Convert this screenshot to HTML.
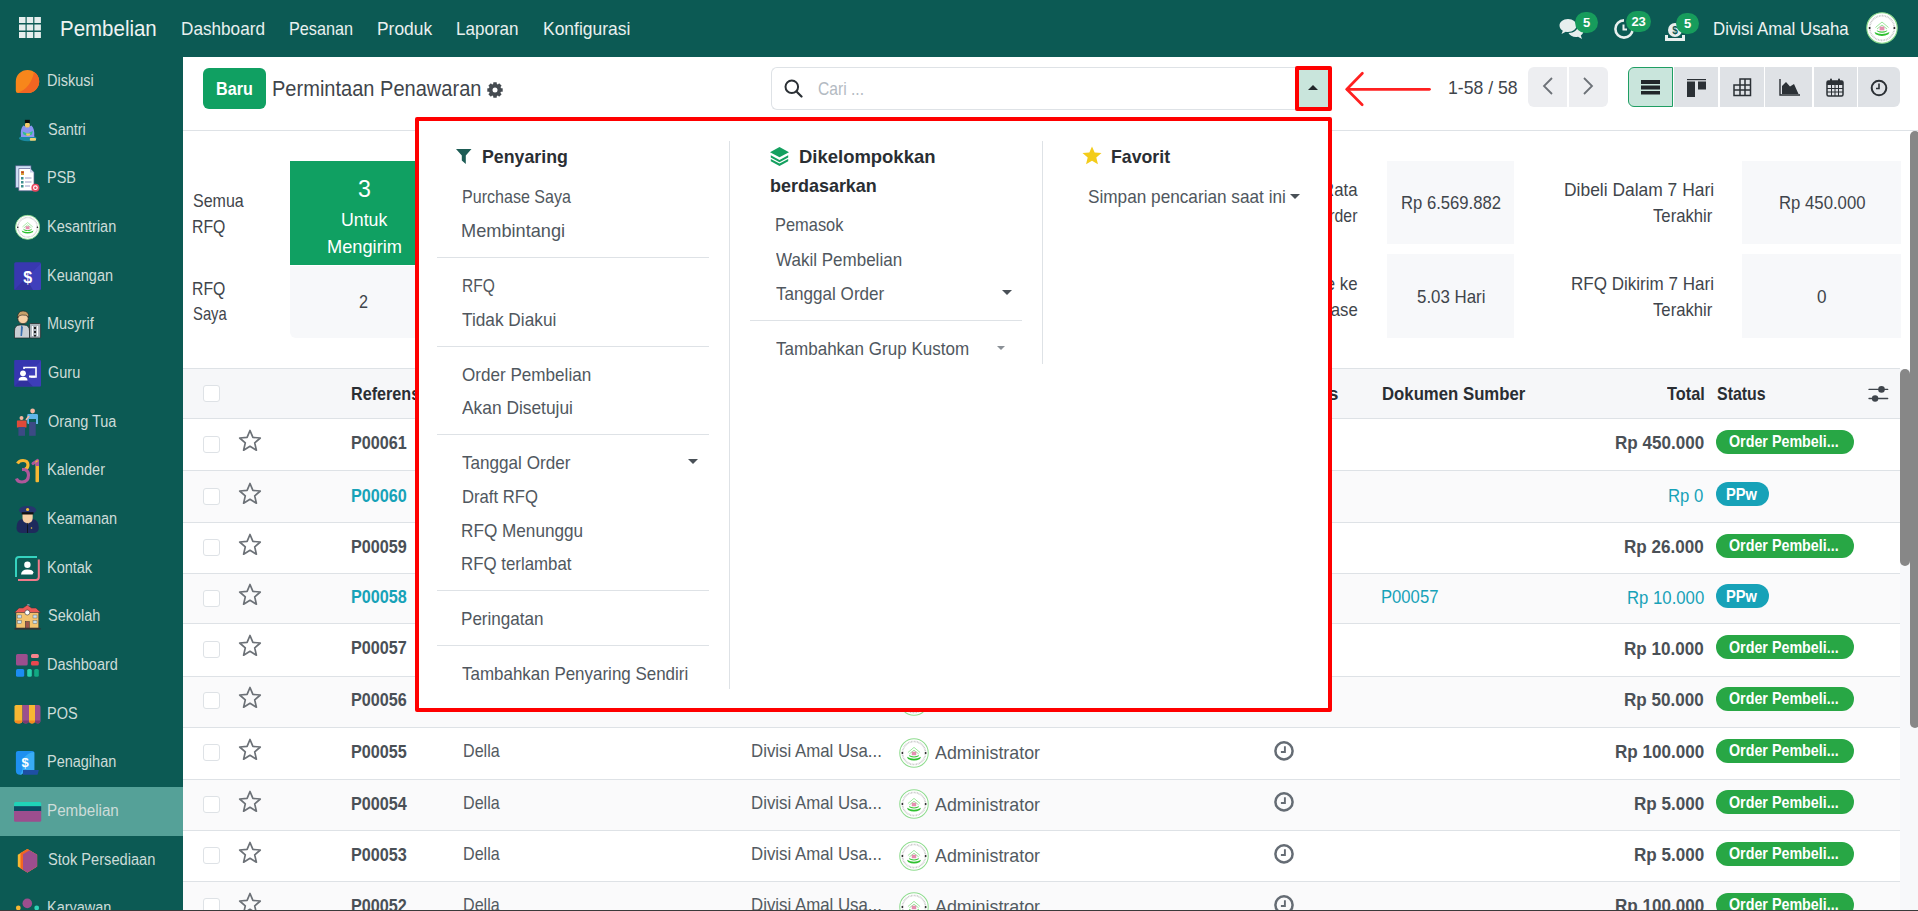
<!DOCTYPE html>
<html><head><meta charset="utf-8">
<style>
*{box-sizing:border-box;margin:0;padding:0}
html,body{width:1918px;height:911px;overflow:hidden;background:#fff;font-family:"Liberation Sans",sans-serif}
.a{position:absolute}
.t{position:absolute;white-space:nowrap;line-height:1;transform-origin:0 0}
.bdg{position:absolute;background:#179c5c;color:#fff;border-radius:11px;font-size:13px;font-weight:700;text-align:center;line-height:21px;height:21px}
.hl{position:absolute;height:1px;background:#dee2e6}
.vl{position:absolute;width:1px;background:#dee2e6}
.dv{position:absolute;height:1px;background:#dee2e6}
.cb{position:absolute;width:16.5px;height:17px;border:1px solid #dee2e6;border-radius:3px;background:#fff}
.caret{position:absolute;width:0;height:0;border-left:5px solid transparent;border-right:5px solid transparent;border-top:5px solid #495057}
</style></head><body>
<div class="a" style="left:0;top:0;width:1918px;height:57px;background:#0c5a54"></div>
<svg class="a" style="left:19px;top:17px" width="22" height="21" viewBox="0 0 22 21"><g fill="#e6eeed">
<rect x="0" y="0" width="6.5" height="6"/><rect x="7.7" y="0" width="6.5" height="6"/><rect x="15.4" y="0" width="6.5" height="6"/>
<rect x="0" y="7.5" width="6.5" height="6"/><rect x="7.7" y="7.5" width="6.5" height="6"/><rect x="15.4" y="7.5" width="6.5" height="6"/>
<rect x="0" y="15" width="6.5" height="6"/><rect x="7.7" y="15" width="6.5" height="6"/><rect x="15.4" y="15" width="6.5" height="6"/></g></svg>
<div class="t" style="left:59.85px;top:18.60px;font-size:21.5px;color:#eef3f2;transform:scaleX(0.9525);">Pembelian</div>
<div class="t" style="left:181.38px;top:19.96px;font-size:18.6px;color:#e9f0ef;transform:scaleX(0.9228);">Dashboard</div>
<div class="t" style="left:289.43px;top:19.96px;font-size:18.6px;color:#e9f0ef;transform:scaleX(0.8729);">Pesanan</div>
<div class="t" style="left:376.67px;top:19.96px;font-size:18.6px;color:#e9f0ef;transform:scaleX(0.9349);">Produk</div>
<div class="t" style="left:456.48px;top:19.96px;font-size:18.6px;color:#e9f0ef;transform:scaleX(0.9163);">Laporan</div>
<div class="t" style="left:542.76px;top:19.96px;font-size:18.6px;color:#e9f0ef;transform:scaleX(0.9396);">Konfigurasi</div>
<svg class="a" style="left:1559px;top:18px" width="25" height="22" viewBox="0 0 25 22"><path d="M9 1C4 1 0.5 4 0.5 7.5C0.5 9.7 1.8 11.5 3.8 12.7L2.5 16L6.8 13.8C7.5 14 8.2 14 9 14C14 14 17.5 11 17.5 7.5S14 1 9 1Z" fill="#e8efee"/><path d="M19 6.5C22 7.5 24.5 9.8 24.5 12.8C24.5 14.8 23.4 16.4 21.8 17.5L23 21L19 18.8C18.3 19 17.6 19 17 19C13.5 19 10.5 17.3 9.5 15C15 15 19.5 11.5 19 6.5Z" fill="#e8efee"/></svg>
<div class="bdg" style="left:1575px;top:12px;width:23px">5</div>
<svg class="a" style="left:1613px;top:17.5px" width="22" height="22" viewBox="0 0 22 22"><path d="M11 2.4A8.6 8.6 0 1 0 19.6 11" fill="none" stroke="#e8efee" stroke-width="2.6"/><path d="M10.5 6.5V11.5H14" stroke="#e8efee" stroke-width="2" fill="none"/></svg>
<div class="bdg" style="left:1626px;top:11px;width:25px;letter-spacing:-0.3px">23</div>
<svg class="a" style="left:1664px;top:21px" width="22" height="21" viewBox="0 0 22 21"><circle cx="11" cy="9" r="7" fill="#e8efee"/><text x="11" y="13" font-family="Liberation Sans" font-size="10" font-weight="700" fill="#0d5852" text-anchor="middle">$</text><path d="M1 14V20H21V14H18V17H4V14Z" fill="#e8efee"/></svg>
<div class="bdg" style="left:1676px;top:13px;width:23px">5</div>
<svg class="a" style="left:1866px;top:12px" width="32" height="32" viewBox="0 0 32 32"><circle cx="16" cy="16" r="15.2" fill="#fff" stroke="#8fdc8f" stroke-width="1.1"/><circle cx="16" cy="16" r="12.3" fill="none" stroke="#c9c9c9" stroke-width="1.8" stroke-dasharray="0.9 0.7"/><path d="M9.5 15.5L16 10L22.5 15.5M11 17L16 13L21 17" fill="none" stroke="#8be38b" stroke-width="0.9"/><rect x="13.6" y="14.6" width="4.8" height="3.8" fill="#e58fb0"/><path d="M10.5 18.2Q16 21 21.5 18.2L20.6 19.6Q16 22 11.4 19.6Z" fill="#3cc83c"/><path d="M8.5 20Q16 24 23.5 20L22.4 22.3Q16 25.5 9.6 22.3Z" fill="#2fc02f"/><circle cx="3.6" cy="16" r="1" fill="#222"/><circle cx="28.4" cy="16" r="1" fill="#222"/></svg>
<div class="t" style="left:1713.09px;top:20.16px;font-size:18.6px;color:#eef3f2;transform:scaleX(0.9056);">Divisi Amal Usaha</div>
<div class="a" style="left:0;top:57px;width:183px;height:854px;background:#0c5a54"></div>
<div class="a" style="left:0;top:787px;width:183px;height:48.6px;background:#55a198"></div>
<svg class="a" style="left:0;top:0" width="183" height="911" viewBox="0 0 183 911">
<!-- Diskusi -->
<path d="M27.5 70A11.7 11.5 0 0 1 39.2 81.5A11.7 11.5 0 0 1 27.5 93H18Q15.8 93 15.8 90.8V81.5A11.7 11.5 0 0 1 27.5 70Z" fill="#f7861b"/>
<path d="M34 72A11.7 11.5 0 0 1 39.2 81.5A11.7 11.5 0 0 1 27.5 93H17.5Q31 88 34 72Z" fill="#f26522"/>
<!-- Santri -->
<ellipse cx="27.8" cy="138.3" rx="8.9" ry="2.9" fill="#1a8aa2"/>
<path d="M21 137Q20 129 23.3 125.6L27.4 127.2L31.5 125.6Q35 129 34.2 137Z" fill="#8a95f2"/>
<path d="M22.5 131.5L27.5 133.5L32.8 131L32 134.5L27.5 136L23.5 134.5Z" fill="#2fbf8f"/>
<path d="M26 133.6H30.5L29.5 135.8H26.5Z" fill="#f0c865"/>
<ellipse cx="27.4" cy="125" rx="2.5" ry="2.6" fill="#f6c96b"/>
<rect x="24.9" y="119.8" width="4.9" height="3.2" fill="#0a0a0a"/>
<rect x="29.8" y="138" width="6.2" height="2.7" rx="1" fill="#f0cf70"/>
<!-- PSB -->
<rect x="15.7" y="165.8" width="15.3" height="21.9" fill="#cfe0f5" stroke="#5a5f8f" stroke-width="0.7"/>
<path d="M18.8 168.5H30L34 172.5V190.8H18.8Z" fill="#fff" stroke="#5a5f8f" stroke-width="0.7"/>
<path d="M30 168.5V172.5H34Z" fill="#c9cdea"/>
<rect x="21" y="171" width="3" height="4" fill="#d8a33a"/><rect x="21.3" y="171.5" width="2.4" height="1.6" fill="#c0392b"/>
<rect x="21" y="177" width="2.5" height="2.5" fill="#3d8f8f"/><rect x="21" y="181" width="2.5" height="2.5" fill="#3d8f8f"/><rect x="21" y="185" width="2.5" height="2.5" fill="#3d8f8f"/>
<path d="M25 178H31.5M25 182H31.5M25 186H30" stroke="#8d8fc0" stroke-width="0.9"/>
<circle cx="35.4" cy="187.7" r="4" fill="#e8465f"/><circle cx="35.4" cy="187.7" r="2.4" fill="#fff"/><circle cx="35.4" cy="187.7" r="1.2" fill="#e8465f"/>
<!-- Kesantrian -->
<svg x="14.9" y="214.6" width="25.4" height="25.4" viewBox="0 0 32 32"><circle cx="16" cy="16" r="15.2" fill="#fff" stroke="#8fdc8f" stroke-width="1.1"/><circle cx="16" cy="16" r="12.3" fill="none" stroke="#c9c9c9" stroke-width="1.8" stroke-dasharray="0.9 0.7"/><path d="M9.5 15.5L16 10L22.5 15.5M11 17L16 13L21 17" fill="none" stroke="#8be38b" stroke-width="0.9"/><rect x="13.6" y="14.6" width="4.8" height="3.8" fill="#e58fb0"/><path d="M10.5 18.2Q16 21 21.5 18.2L20.6 19.6Q16 22 11.4 19.6Z" fill="#3cc83c"/><path d="M8.5 20Q16 24 23.5 20L22.4 22.3Q16 25.5 9.6 22.3Z" fill="#2fc02f"/><circle cx="3.6" cy="16" r="1" fill="#222"/><circle cx="28.4" cy="16" r="1" fill="#222"/></svg>
<!-- Keuangan -->
<rect x="14.2" y="262.3" width="26.8" height="27.7" rx="1.5" fill="#3838b0"/>
<path d="M14.2 290L41 263.5V288.5Q41 290 39.5 290Z" fill="#4646c4" opacity="0.55"/>
<path d="M14.2 290L26 278L33 290Z" fill="#2c2c8f" opacity="0.6"/>
<text x="27.6" y="282.5" font-family="Liberation Sans" font-weight="700" font-size="16" fill="#fff" text-anchor="middle">$</text>
<!-- Musyrif -->
<path d="M14.5 338V331Q14.5 325 20 325H24Q29.5 325 29.5 331V338Z" fill="#c9ced3" stroke="#222" stroke-width="0.7"/>
<path d="M21 325L23 327L22 336L20.5 336L21 327Z" fill="#3b6fb0"/>
<circle cx="23" cy="318.5" r="5.2" fill="#f6cfa5" stroke="#222" stroke-width="0.7"/>
<path d="M17.5 318Q17.5 311 23 311Q28.8 311 28.8 317Q26 314.5 22 315Q19 315 17.5 318Z" fill="#c8a06a" stroke="#222" stroke-width="0.6"/>
<rect x="29.5" y="323.5" width="11.1" height="14.5" rx="1" fill="#a9b1b8" stroke="#222" stroke-width="0.7"/>
<path d="M32.5 326V336M37.5 326V336" stroke="#fff" stroke-width="1.2"/>
<g fill="#222"><rect x="34" y="327" width="2" height="2"/><rect x="34" y="331" width="2" height="2"/><rect x="34" y="335" width="2" height="1.5"/></g>
<!-- Guru -->
<rect x="14.2" y="360" width="26.8" height="26.5" rx="1" fill="#3636b0"/>
<path d="M14.2 386.5L41 361V385.5Q41 386.5 40 386.5Z" fill="#4444c2" opacity="0.5"/>
<path d="M14.2 386.5L24 377L33 386.5Z" fill="#2a2a8c" opacity="0.6"/>
<path d="M24 369V367.5H36V377H30.5" fill="none" stroke="#fff" stroke-width="1.6"/>
<circle cx="23" cy="373.3" r="2.9" fill="#fff"/>
<path d="M18.5 380.5Q18.5 376.8 23 376.8Q27.5 376.8 27.5 380.5Z" fill="#fff"/>
<rect x="29" y="375.5" width="6" height="2" fill="#fff"/>
<!-- Orang Tua -->
<circle cx="32.6" cy="411" r="2.4" fill="#f6b8a0"/>
<path d="M28 414H37Q38 414 38 415.5V424H36V419H29V424Q27.2 424 27.2 422.5V415.5Q27.2 414 28 414Z" fill="#5fb6e8"/>
<rect x="29.2" y="422" width="6.5" height="13.8" fill="#3c4a85"/>
<path d="M26 420L29 416" stroke="#f6b8a0" stroke-width="1.6"/>
<circle cx="21.5" cy="418" r="2" fill="#f6b8a0"/>
<path d="M17.5 420.4H25.8Q26.5 420.4 26.5 421.5V427.5H16.9V421.5Q16.9 420.4 17.5 420.4Z" fill="#e04a3a"/>
<rect x="18.4" y="427" width="6.6" height="8.8" fill="#3c4a85"/>
<!-- Kalender -->
<path d="M17.5 463.5Q19 460.5 23 460.5Q28 460.5 28 465Q28 468 25 469.5" fill="none" stroke="#f7b733" stroke-width="3.1"/>
<path d="M25 469.5Q28.5 471 28.5 475Q28.5 482 22 482Q17.5 482 16.5 478.5" fill="none" stroke="#b0579b" stroke-width="3.1"/>
<path d="M22 469.5H25" stroke="#b0579b" stroke-width="3.1"/>
<path d="M33 463.5L37.5 460.5" stroke="#b0579b" stroke-width="3.1" stroke-linecap="round"/>
<rect x="35.5" y="460.5" width="3.5" height="21.8" rx="1" fill="#f7b733"/>
<path d="M35.5 463L39 460.5V466L35.5 466Z" fill="#b0579b"/>
<!-- Keamanan -->
<path d="M16.5 528Q16.5 520 22 519L27.6 521L33 519Q38.8 520 38.8 528Q38.8 533 33 533H22Q16.5 533 16.5 528Z" fill="#1e2a5c"/>
<path d="M25 519.5H30.2L27.6 525Z" fill="#f3c9a2"/>
<path d="M27.2 522H28V533H27.2Z" fill="#111"/>
<circle cx="31.5" cy="528" r="0.8" fill="#f3c33a"/>
<path d="M22.5 513H32.7V518Q32.7 523 27.6 523Q22.5 523 22.5 518Z" fill="#f6cfa5"/>
<path d="M19 511Q19 506 27.6 506Q36.3 506 36.3 511L33.5 513.5H21.7Z" fill="#26366e"/>
<rect x="21.7" y="512.2" width="11.8" height="2.3" fill="#111"/>
<circle cx="27.6" cy="509.5" r="1.6" fill="#f3c33a"/>
<!-- Kontak -->
<path d="M37 557H19Q16 557 16 560V577" fill="none" stroke="#35d3bf" stroke-width="2"/>
<path d="M38.8 559.5V577Q38.8 580 35.8 580H18" fill="none" stroke="#f07a8a" stroke-width="2"/>
<circle cx="27.4" cy="564.8" r="3.2" fill="#fff"/>
<path d="M21 574.5Q21.5 569.5 27.4 569.5Q33 569.5 33.5 572.5L32.5 574.5Z" fill="#fff"/>
<!-- Sekolah -->
<path d="M27.3 604V608" stroke="#444" stroke-width="0.7"/><path d="M27.3 604L30.5 605L27.3 606Z" fill="#9fc1d6"/>
<rect x="16" y="612" width="22.8" height="16" fill="#f3c36f" stroke="#333" stroke-width="0.6"/>
<path d="M14.5 612.5L19 608H23L27.3 605L31.6 608H36L40.6 612.5Z" fill="#e95b57" stroke="#333" stroke-width="0.5"/>
<circle cx="27.3" cy="612.5" r="2.5" fill="#fff" stroke="#333" stroke-width="0.6"/>
<rect x="25.3" y="621.5" width="4" height="6.5" fill="#a0564a" stroke="#333" stroke-width="0.5"/>
<g fill="#c7e0f0" stroke="#555" stroke-width="0.4"><rect x="17.5" y="615" width="4" height="3"/><rect x="17.5" y="620.5" width="4" height="3"/><rect x="33" y="615" width="4" height="3"/><rect x="33" y="620.5" width="4" height="3"/></g>
<rect x="14.5" y="628" width="26.1" height="1.6" fill="#333"/>
<!-- Dashboard -->
<rect x="16" y="654" width="11.7" height="11.5" rx="1.5" fill="#9c4e8e"/>
<rect x="31" y="654" width="7.8" height="4" rx="1.5" fill="#f7838c"/>
<rect x="31" y="661" width="7.8" height="4.5" rx="1.5" fill="#e8474f"/>
<rect x="16" y="669" width="8.2" height="7.8" rx="1.5" fill="#1c8cf2"/>
<rect x="27.2" y="669" width="4.6" height="7.8" rx="1.5" fill="#28d0ab"/>
<rect x="34.2" y="669" width="4.6" height="7.8" rx="1.5" fill="#11a982"/>
<!-- POS -->
<path d="M16 705H22.5V720.5Q22.5 723.5 19.2 723.5Q14.5 723.5 14.5 720.5V706.5Q14.5 705 16 705Z" fill="#f7b733"/>
<path d="M22.5 705H29V720.5Q29 723.5 25.8 723.5Q22.5 723.5 22.5 720.5Z" fill="#9c4e8e"/>
<path d="M29 705H35V720.5Q35 723.5 32 723.5Q29 723.5 29 720.5Z" fill="#f7b733"/>
<path d="M35 705H38.5Q40.5 705 40.5 707V720.5Q40.5 723.5 37.8 723.5Q35 723.5 35 720.5Z" fill="#9c4e8e"/>
<path d="M14.5 720.5Q14.5 723.5 18.5 723.5Q22.5 723.5 22.5 720.5Z" fill="#f58a1f"/>
<path d="M29 720.5Q29 723.5 32 723.5Q35 723.5 35 720.5Z" fill="#f58a1f"/>
<path d="M22.5 720.5Q22.5 723.5 25.8 723.5Q29 723.5 29 720.5Z" fill="#7d3a70"/>
<path d="M35 720.5Q35 723.5 37.8 723.5Q40.5 723.5 40.5 720.5Z" fill="#7d3a70"/>
<!-- Penagihan -->
<path d="M23 770H38.5Q39 770 38.6 771L37.5 774.7H23Z" fill="#1e4fa3"/>
<path d="M15.9 753Q15.9 750.9 18 750.9H32.2Q34.3 750.9 34.3 753V770H23V772Q23 774.7 20 774.7Q15.9 774.7 15.9 771Z" fill="#1e90f0"/>
<path d="M34.3 752V770H23V772Q23 774.7 20 774.7Q24 770 22 760Q28 752 34.3 752Z" fill="#3fb4f8" opacity="0.8"/>
<text x="25.2" y="767" font-family="Liberation Sans" font-weight="700" font-size="13" fill="#fff" text-anchor="middle">$</text>
<!-- Pembelian -->
<path d="M14 803.5Q14 802 15.5 802H39.7Q41.2 802 41.2 803.5V806.5H14Z" fill="#20d3b8"/>
<rect x="14" y="806.2" width="27.2" height="5" fill="#0b4d63"/>
<path d="M14 811H41.2V820.2Q41.2 821.7 39.7 821.7H15.5Q14 821.7 14 820.2Z" fill="#9c4e8e"/>
<!-- Stok -->
<path d="M27.4 849L37.1 854.8V866.6L27.4 872.4L17.8 866.6V854.8Z" fill="#f7b733"/>
<path d="M27.4 849L37.1 854.8V866.6L27.4 872.4L20.5 868.2V853Z" fill="#f26522"/>
<path d="M29.5 850.3L37.1 854.8V866.6L27.4 872.4L23 869.7V854.2Z" fill="#9c4e8e"/>
<!-- Karyawan -->
<circle cx="27.3" cy="903.4" r="4.8" fill="#9c4e8e"/>
<circle cx="18.3" cy="908" r="2.4" fill="#f7b733"/>
<circle cx="36.7" cy="908" r="2.4" fill="#2ed3b7"/>
</svg>

<div class="t" style="left:47.29px;top:73.16px;font-size:16px;color:#cddcd9;transform:scaleX(0.9059);">Diskusi</div>
<div class="t" style="left:48.00px;top:121.81px;font-size:16px;color:#cddcd9;transform:scaleX(0.9050);">Santri</div>
<div class="t" style="left:47.09px;top:170.46px;font-size:16px;color:#cddcd9;transform:scaleX(0.9050);">PSB</div>
<div class="t" style="left:47.09px;top:219.11px;font-size:16px;color:#cddcd9;transform:scaleX(0.9050);">Kesantrian</div>
<div class="t" style="left:47.09px;top:267.76px;font-size:16px;color:#cddcd9;transform:scaleX(0.9050);">Keuangan</div>
<div class="t" style="left:47.09px;top:316.41px;font-size:16px;color:#cddcd9;transform:scaleX(0.9050);">Musyrif</div>
<div class="t" style="left:48.00px;top:365.06px;font-size:16px;color:#cddcd9;transform:scaleX(0.9050);">Guru</div>
<div class="t" style="left:48.00px;top:413.71px;font-size:16px;color:#cddcd9;transform:scaleX(0.9050);">Orang Tua</div>
<div class="t" style="left:47.09px;top:462.36px;font-size:16px;color:#cddcd9;transform:scaleX(0.9050);">Kalender</div>
<div class="t" style="left:47.09px;top:511.01px;font-size:16px;color:#cddcd9;transform:scaleX(0.9050);">Keamanan</div>
<div class="t" style="left:47.09px;top:559.66px;font-size:16px;color:#cddcd9;transform:scaleX(0.9050);">Kontak</div>
<div class="t" style="left:48.00px;top:608.31px;font-size:16px;color:#cddcd9;transform:scaleX(0.9050);">Sekolah</div>
<div class="t" style="left:47.09px;top:656.96px;font-size:16px;color:#cddcd9;transform:scaleX(0.9050);">Dashboard</div>
<div class="t" style="left:47.09px;top:705.61px;font-size:16px;color:#cddcd9;transform:scaleX(0.9050);">POS</div>
<div class="t" style="left:47.09px;top:754.26px;font-size:16px;color:#cddcd9;transform:scaleX(0.9050);">Penagihan</div>
<div class="t" style="left:46.75px;top:802.91px;font-size:16px;color:#cddcd9;transform:scaleX(0.9498);">Pembelian</div>
<div class="t" style="left:47.70px;top:851.56px;font-size:16px;color:#cddcd9;transform:scaleX(0.9141);">Stok Persediaan</div>
<div class="t" style="left:47.09px;top:900.21px;font-size:16px;color:#cddcd9;transform:scaleX(0.9050);">Karyawan</div>
<div class="a" style="left:183px;top:57px;width:1735px;height:854px;background:#fff"></div>
<div class="hl" style="left:183px;top:130px;width:1735px"></div>
<div class="t" style="left:192.60px;top:192.36px;font-size:18.6px;color:#3f454b;transform:scaleX(0.8611);">Semua</div>
<div class="t" style="left:191.75px;top:217.86px;font-size:18.6px;color:#3f454b;transform:scaleX(0.8495);">RFQ</div>
<div class="t" style="left:191.75px;top:279.66px;font-size:18.6px;color:#3f454b;transform:scaleX(0.8495);">RFQ</div>
<div class="t" style="left:192.60px;top:305.46px;font-size:18.6px;color:#3f454b;transform:scaleX(0.7969);">Saya</div>
<div class="a" style="left:290px;top:161px;width:149px;height:104px;background:#10a062"></div>
<div class="a" style="left:290px;top:266px;width:149px;height:72px;background:#f7f8fa;border-radius:0 0 0 6px"></div>
<div class="t" style="left:357.90px;top:177.83px;font-size:23px;color:#fff;transform:scaleX(1.0083);">3</div>
<div class="t" style="left:341.05px;top:210.76px;font-size:18.6px;color:#fff;transform:scaleX(0.9529);">Untuk</div>
<div class="t" style="left:327.32px;top:237.76px;font-size:18.6px;color:#fff;transform:scaleX(0.9805);">Mengirim</div>
<div class="t" style="left:358.60px;top:293.06px;font-size:18.6px;color:#3f454b;transform:scaleX(0.8700);">2</div>
<div class="t" style="left:1243.54px;top:181.06px;font-size:18.6px;color:#3f454b;transform:scaleX(0.9000);">Nilai Rata-Rata</div>
<div class="t" style="left:1317.36px;top:207.06px;font-size:18.6px;color:#3f454b;transform:scaleX(0.8500);">Order</div>
<div class="t" style="left:1257.14px;top:275.06px;font-size:18.6px;color:#3f454b;transform:scaleX(0.9000);">Lead Time ke</div>
<div class="t" style="left:1287.21px;top:301.06px;font-size:18.6px;color:#3f454b;transform:scaleX(0.9000);">Purchase</div>
<div class="a" style="left:1387px;top:161px;width:127px;height:83px;background:#f7f8fa"></div>
<div class="a" style="left:1387px;top:254px;width:127px;height:84px;background:#f7f8fa"></div>
<div class="t" style="left:1400.51px;top:194.06px;font-size:18.6px;color:#3f454b;transform:scaleX(0.8947);">Rp 6.569.882</div>
<div class="t" style="left:1417.40px;top:288.16px;font-size:18.6px;color:#3f454b;transform:scaleX(0.9069);">5.03 Hari</div>
<div class="t" style="left:1563.56px;top:181.06px;font-size:18.6px;color:#3f454b;transform:scaleX(0.9372);">Dibeli Dalam 7 Hari</div>
<div class="t" style="left:1653.40px;top:207.06px;font-size:18.6px;color:#3f454b;transform:scaleX(0.8978);">Terakhir</div>
<div class="t" style="left:1570.68px;top:275.06px;font-size:18.6px;color:#3f454b;transform:scaleX(0.9165);">RFQ Dikirim 7 Hari</div>
<div class="t" style="left:1653.40px;top:301.06px;font-size:18.6px;color:#3f454b;transform:scaleX(0.8978);">Terakhir</div>
<div class="a" style="left:1742px;top:161px;width:159px;height:83px;background:#f7f8fa"></div>
<div class="a" style="left:1742px;top:254px;width:159px;height:84px;background:#f7f8fa"></div>
<div class="t" style="left:1778.80px;top:194.06px;font-size:18.6px;color:#3f454b;transform:scaleX(0.8997);">Rp 450.000</div>
<div class="t" style="left:1817.40px;top:288.16px;font-size:18.6px;color:#3f454b;transform:scaleX(0.9200);">0</div>
<div class="a" style="left:183px;top:368px;width:1717px;height:51px;background:#f6f7f9;border-top:1px solid #dee2e6;border-bottom:1px solid #dee2e6"></div>
<div class="cb" style="left:203px;top:385px"></div>
<div class="t" style="left:350.93px;top:385.06px;font-size:18.6px;font-weight:700;color:#2a2e33;transform:scaleX(0.8700);">Referensi</div>
<div class="t" style="left:1260.00px;top:385.06px;font-size:18.6px;font-weight:700;color:#2a2e33;transform:scaleX(1.0108);">Aktivitas</div>
<div class="t" style="left:1381.60px;top:385.06px;font-size:18.6px;font-weight:700;color:#2a2e33;transform:scaleX(0.9007);">Dokumen Sumber</div>
<div class="t" style="left:1666.70px;top:385.06px;font-size:18.6px;font-weight:700;color:#2a2e33;transform:scaleX(0.8790);">Total</div>
<div class="t" style="left:1716.60px;top:385.06px;font-size:18.6px;font-weight:700;color:#2a2e33;transform:scaleX(0.8569);">Status</div>
<svg class="a" style="left:1868px;top:385px" width="21" height="18" viewBox="0 0 21 18"><path d="M1 4.4H19.7M1 13.5H19.7" stroke="#3f454c" stroke-width="1.3" stroke-linecap="round"/><circle cx="13.5" cy="4.4" r="3.3" fill="#3f454c"/><circle cx="7.1" cy="13.5" r="3.2" fill="#3f454c"/></svg>
<div class="a" style="left:183px;top:419px;width:1717px;height:51px;background:#fff"></div>
<div class="hl" style="left:183px;top:470px;width:1717px"></div>
<div class="cb" style="left:203px;top:435.50px"></div>
<svg class="a" style="left:238px;top:429.30px" width="24" height="23" viewBox="0 0 24 23"><path d="M12 1.5L14.9 8.4L22.3 9L16.7 13.9L18.4 21.2L12 17.3L5.6 21.2L7.3 13.9L1.7 9L9.1 8.4Z" fill="none" stroke="#6c7177" stroke-width="1.7" stroke-linejoin="round"/></svg>
<div class="t" style="left:350.93px;top:434.36px;font-size:18.6px;font-weight:700;color:#4a5056;transform:scaleX(0.8715);">P00061</div>
<div class="t" style="left:1614.68px;top:434.46px;font-size:18.6px;font-weight:700;color:#4a5056;transform:scaleX(0.9173);">Rp 450.000</div>
<div class="a" style="left:1716px;top:430.00px;width:138px;height:24px;border-radius:12px;background:#28a745"></div>
<div class="t" style="left:1728.50px;top:434.46px;font-size:16.7px;font-weight:700;color:#fff;transform:scaleX(0.8567);">Order Pembeli...</div>
<div class="a" style="left:183px;top:471px;width:1717px;height:51px;background:#fafafb"></div>
<div class="hl" style="left:183px;top:522px;width:1717px"></div>
<div class="cb" style="left:203px;top:487.70px"></div>
<svg class="a" style="left:238px;top:481.50px" width="24" height="23" viewBox="0 0 24 23"><path d="M12 1.5L14.9 8.4L22.3 9L16.7 13.9L18.4 21.2L12 17.3L5.6 21.2L7.3 13.9L1.7 9L9.1 8.4Z" fill="none" stroke="#6c7177" stroke-width="1.7" stroke-linejoin="round"/></svg>
<div class="t" style="left:350.93px;top:486.56px;font-size:18.6px;font-weight:700;color:#17a2b8;transform:scaleX(0.8715);">P00060</div>
<div class="t" style="left:1668.46px;top:486.66px;font-size:18.6px;color:#17a2b8;transform:scaleX(0.9000);">Rp 0</div>
<div class="a" style="left:1716px;top:482.20px;width:53px;height:24px;border-radius:12px;background:#17a2b8"></div>
<div class="t" style="left:1726.12px;top:486.66px;font-size:16.7px;font-weight:700;color:#fff;transform:scaleX(0.8792);">PPw</div>
<div class="a" style="left:183px;top:523px;width:1717px;height:50px;background:#fff"></div>
<div class="hl" style="left:183px;top:573px;width:1717px"></div>
<div class="cb" style="left:203px;top:539.15px"></div>
<svg class="a" style="left:238px;top:532.95px" width="24" height="23" viewBox="0 0 24 23"><path d="M12 1.5L14.9 8.4L22.3 9L16.7 13.9L18.4 21.2L12 17.3L5.6 21.2L7.3 13.9L1.7 9L9.1 8.4Z" fill="none" stroke="#6c7177" stroke-width="1.7" stroke-linejoin="round"/></svg>
<div class="t" style="left:350.93px;top:538.01px;font-size:18.6px;font-weight:700;color:#4a5056;transform:scaleX(0.8715);">P00059</div>
<div class="t" style="left:1624.17px;top:538.11px;font-size:18.6px;font-weight:700;color:#4a5056;transform:scaleX(0.9173);">Rp 26.000</div>
<div class="a" style="left:1716px;top:533.65px;width:138px;height:24px;border-radius:12px;background:#28a745"></div>
<div class="t" style="left:1728.50px;top:538.11px;font-size:16.7px;font-weight:700;color:#fff;transform:scaleX(0.8567);">Order Pembeli...</div>
<div class="a" style="left:183px;top:574px;width:1717px;height:49px;background:#fafafb"></div>
<div class="hl" style="left:183px;top:623px;width:1717px"></div>
<div class="cb" style="left:203px;top:589.55px"></div>
<svg class="a" style="left:238px;top:583.35px" width="24" height="23" viewBox="0 0 24 23"><path d="M12 1.5L14.9 8.4L22.3 9L16.7 13.9L18.4 21.2L12 17.3L5.6 21.2L7.3 13.9L1.7 9L9.1 8.4Z" fill="none" stroke="#6c7177" stroke-width="1.7" stroke-linejoin="round"/></svg>
<div class="t" style="left:350.93px;top:588.41px;font-size:18.6px;font-weight:700;color:#17a2b8;transform:scaleX(0.8715);">P00058</div>
<div class="t" style="left:1380.80px;top:588.41px;font-size:18.6px;color:#17a2b8;transform:scaleX(0.8954);">P00057</div>
<div class="t" style="left:1626.58px;top:588.51px;font-size:18.6px;color:#17a2b8;transform:scaleX(0.9000);">Rp 10.000</div>
<div class="a" style="left:1716px;top:584.05px;width:53px;height:24px;border-radius:12px;background:#17a2b8"></div>
<div class="t" style="left:1726.12px;top:588.51px;font-size:16.7px;font-weight:700;color:#fff;transform:scaleX(0.8792);">PPw</div>
<div class="a" style="left:183px;top:624px;width:1717px;height:52px;background:#fff"></div>
<div class="hl" style="left:183px;top:676px;width:1717px"></div>
<div class="cb" style="left:203px;top:640.60px"></div>
<svg class="a" style="left:238px;top:634.40px" width="24" height="23" viewBox="0 0 24 23"><path d="M12 1.5L14.9 8.4L22.3 9L16.7 13.9L18.4 21.2L12 17.3L5.6 21.2L7.3 13.9L1.7 9L9.1 8.4Z" fill="none" stroke="#6c7177" stroke-width="1.7" stroke-linejoin="round"/></svg>
<div class="t" style="left:350.93px;top:639.46px;font-size:18.6px;font-weight:700;color:#4a5056;transform:scaleX(0.8715);">P00057</div>
<div class="t" style="left:1624.17px;top:639.56px;font-size:18.6px;font-weight:700;color:#4a5056;transform:scaleX(0.9173);">Rp 10.000</div>
<div class="a" style="left:1716px;top:635.10px;width:138px;height:24px;border-radius:12px;background:#28a745"></div>
<div class="t" style="left:1728.50px;top:639.56px;font-size:16.7px;font-weight:700;color:#fff;transform:scaleX(0.8567);">Order Pembeli...</div>
<div class="a" style="left:183px;top:677px;width:1717px;height:50px;background:#fafafb"></div>
<div class="hl" style="left:183px;top:727px;width:1717px"></div>
<div class="cb" style="left:203px;top:692.40px"></div>
<svg class="a" style="left:238px;top:686.20px" width="24" height="23" viewBox="0 0 24 23"><path d="M12 1.5L14.9 8.4L22.3 9L16.7 13.9L18.4 21.2L12 17.3L5.6 21.2L7.3 13.9L1.7 9L9.1 8.4Z" fill="none" stroke="#6c7177" stroke-width="1.7" stroke-linejoin="round"/></svg>
<div class="t" style="left:350.93px;top:691.26px;font-size:18.6px;font-weight:700;color:#4a5056;transform:scaleX(0.8715);">P00056</div>
<div class="t" style="left:462.83px;top:690.26px;font-size:18.6px;color:#535a61;transform:scaleX(0.8660);">Della</div>
<div class="t" style="left:750.70px;top:690.36px;font-size:18.6px;color:#535a61;transform:scaleX(0.9045);">Divisi Amal Usa...</div>
<svg class="a" style="left:899px;top:685.90px" width="30" height="30" viewBox="0 0 32 32"><circle cx="16" cy="16" r="15.2" fill="#fff" stroke="#8fdc8f" stroke-width="1.1"/><circle cx="16" cy="16" r="12.3" fill="none" stroke="#c9c9c9" stroke-width="1.8" stroke-dasharray="0.9 0.7"/><path d="M9.5 15.5L16 10L22.5 15.5M11 17L16 13L21 17" fill="none" stroke="#8be38b" stroke-width="0.9"/><rect x="13.6" y="14.6" width="4.8" height="3.8" fill="#e58fb0"/><path d="M10.5 18.2Q16 21 21.5 18.2L20.6 19.6Q16 22 11.4 19.6Z" fill="#3cc83c"/><path d="M8.5 20Q16 24 23.5 20L22.4 22.3Q16 25.5 9.6 22.3Z" fill="#2fc02f"/><circle cx="3.6" cy="16" r="1" fill="#222"/><circle cx="28.4" cy="16" r="1" fill="#222"/></svg>
<div class="t" style="left:934.60px;top:692.26px;font-size:18.6px;color:#535a61;transform:scaleX(0.9585);">Administrator</div>
<svg class="a" style="left:1274px;top:688.90px" width="20" height="20" viewBox="0 0 20 20"><circle cx="10" cy="9.9" r="8.6" fill="none" stroke="#656c74" stroke-width="2.5"/><path d="M10.9 5.2V11H6.9" stroke="#656c74" stroke-width="1.9" fill="none"/></svg>
<div class="t" style="left:1624.17px;top:691.36px;font-size:18.6px;font-weight:700;color:#4a5056;transform:scaleX(0.9173);">Rp 50.000</div>
<div class="a" style="left:1716px;top:686.90px;width:138px;height:24px;border-radius:12px;background:#28a745"></div>
<div class="t" style="left:1728.50px;top:691.36px;font-size:16.7px;font-weight:700;color:#fff;transform:scaleX(0.8567);">Order Pembeli...</div>
<div class="a" style="left:183px;top:728px;width:1717px;height:51px;background:#fff"></div>
<div class="hl" style="left:183px;top:779px;width:1717px"></div>
<div class="cb" style="left:203px;top:744.05px"></div>
<svg class="a" style="left:238px;top:737.85px" width="24" height="23" viewBox="0 0 24 23"><path d="M12 1.5L14.9 8.4L22.3 9L16.7 13.9L18.4 21.2L12 17.3L5.6 21.2L7.3 13.9L1.7 9L9.1 8.4Z" fill="none" stroke="#6c7177" stroke-width="1.7" stroke-linejoin="round"/></svg>
<div class="t" style="left:350.93px;top:742.91px;font-size:18.6px;font-weight:700;color:#4a5056;transform:scaleX(0.8715);">P00055</div>
<div class="t" style="left:462.83px;top:741.91px;font-size:18.6px;color:#535a61;transform:scaleX(0.8660);">Della</div>
<div class="t" style="left:750.70px;top:742.01px;font-size:18.6px;color:#535a61;transform:scaleX(0.9045);">Divisi Amal Usa...</div>
<svg class="a" style="left:899px;top:737.55px" width="30" height="30" viewBox="0 0 32 32"><circle cx="16" cy="16" r="15.2" fill="#fff" stroke="#8fdc8f" stroke-width="1.1"/><circle cx="16" cy="16" r="12.3" fill="none" stroke="#c9c9c9" stroke-width="1.8" stroke-dasharray="0.9 0.7"/><path d="M9.5 15.5L16 10L22.5 15.5M11 17L16 13L21 17" fill="none" stroke="#8be38b" stroke-width="0.9"/><rect x="13.6" y="14.6" width="4.8" height="3.8" fill="#e58fb0"/><path d="M10.5 18.2Q16 21 21.5 18.2L20.6 19.6Q16 22 11.4 19.6Z" fill="#3cc83c"/><path d="M8.5 20Q16 24 23.5 20L22.4 22.3Q16 25.5 9.6 22.3Z" fill="#2fc02f"/><circle cx="3.6" cy="16" r="1" fill="#222"/><circle cx="28.4" cy="16" r="1" fill="#222"/></svg>
<div class="t" style="left:934.60px;top:743.91px;font-size:18.6px;color:#535a61;transform:scaleX(0.9585);">Administrator</div>
<svg class="a" style="left:1274px;top:740.55px" width="20" height="20" viewBox="0 0 20 20"><circle cx="10" cy="9.9" r="8.6" fill="none" stroke="#656c74" stroke-width="2.5"/><path d="M10.9 5.2V11H6.9" stroke="#656c74" stroke-width="1.9" fill="none"/></svg>
<div class="t" style="left:1614.68px;top:743.01px;font-size:18.6px;font-weight:700;color:#4a5056;transform:scaleX(0.9173);">Rp 100.000</div>
<div class="a" style="left:1716px;top:738.55px;width:138px;height:24px;border-radius:12px;background:#28a745"></div>
<div class="t" style="left:1728.50px;top:743.01px;font-size:16.7px;font-weight:700;color:#fff;transform:scaleX(0.8567);">Order Pembeli...</div>
<div class="a" style="left:183px;top:780px;width:1717px;height:50px;background:#fafafb"></div>
<div class="hl" style="left:183px;top:830px;width:1717px"></div>
<div class="cb" style="left:203px;top:795.85px"></div>
<svg class="a" style="left:238px;top:789.65px" width="24" height="23" viewBox="0 0 24 23"><path d="M12 1.5L14.9 8.4L22.3 9L16.7 13.9L18.4 21.2L12 17.3L5.6 21.2L7.3 13.9L1.7 9L9.1 8.4Z" fill="none" stroke="#6c7177" stroke-width="1.7" stroke-linejoin="round"/></svg>
<div class="t" style="left:350.93px;top:794.71px;font-size:18.6px;font-weight:700;color:#4a5056;transform:scaleX(0.8715);">P00054</div>
<div class="t" style="left:462.83px;top:793.71px;font-size:18.6px;color:#535a61;transform:scaleX(0.8660);">Della</div>
<div class="t" style="left:750.70px;top:793.81px;font-size:18.6px;color:#535a61;transform:scaleX(0.9045);">Divisi Amal Usa...</div>
<svg class="a" style="left:899px;top:789.35px" width="30" height="30" viewBox="0 0 32 32"><circle cx="16" cy="16" r="15.2" fill="#fff" stroke="#8fdc8f" stroke-width="1.1"/><circle cx="16" cy="16" r="12.3" fill="none" stroke="#c9c9c9" stroke-width="1.8" stroke-dasharray="0.9 0.7"/><path d="M9.5 15.5L16 10L22.5 15.5M11 17L16 13L21 17" fill="none" stroke="#8be38b" stroke-width="0.9"/><rect x="13.6" y="14.6" width="4.8" height="3.8" fill="#e58fb0"/><path d="M10.5 18.2Q16 21 21.5 18.2L20.6 19.6Q16 22 11.4 19.6Z" fill="#3cc83c"/><path d="M8.5 20Q16 24 23.5 20L22.4 22.3Q16 25.5 9.6 22.3Z" fill="#2fc02f"/><circle cx="3.6" cy="16" r="1" fill="#222"/><circle cx="28.4" cy="16" r="1" fill="#222"/></svg>
<div class="t" style="left:934.60px;top:795.71px;font-size:18.6px;color:#535a61;transform:scaleX(0.9585);">Administrator</div>
<svg class="a" style="left:1274px;top:792.35px" width="20" height="20" viewBox="0 0 20 20"><circle cx="10" cy="9.9" r="8.6" fill="none" stroke="#656c74" stroke-width="2.5"/><path d="M10.9 5.2V11H6.9" stroke="#656c74" stroke-width="1.9" fill="none"/></svg>
<div class="t" style="left:1633.65px;top:794.81px;font-size:18.6px;font-weight:700;color:#4a5056;transform:scaleX(0.9173);">Rp 5.000</div>
<div class="a" style="left:1716px;top:790.35px;width:138px;height:24px;border-radius:12px;background:#28a745"></div>
<div class="t" style="left:1728.50px;top:794.81px;font-size:16.7px;font-weight:700;color:#fff;transform:scaleX(0.8567);">Order Pembeli...</div>
<div class="a" style="left:183px;top:831px;width:1717px;height:50px;background:#fff"></div>
<div class="hl" style="left:183px;top:881px;width:1717px"></div>
<div class="cb" style="left:203px;top:847.15px"></div>
<svg class="a" style="left:238px;top:840.95px" width="24" height="23" viewBox="0 0 24 23"><path d="M12 1.5L14.9 8.4L22.3 9L16.7 13.9L18.4 21.2L12 17.3L5.6 21.2L7.3 13.9L1.7 9L9.1 8.4Z" fill="none" stroke="#6c7177" stroke-width="1.7" stroke-linejoin="round"/></svg>
<div class="t" style="left:350.93px;top:846.01px;font-size:18.6px;font-weight:700;color:#4a5056;transform:scaleX(0.8715);">P00053</div>
<div class="t" style="left:462.83px;top:845.01px;font-size:18.6px;color:#535a61;transform:scaleX(0.8660);">Della</div>
<div class="t" style="left:750.70px;top:845.11px;font-size:18.6px;color:#535a61;transform:scaleX(0.9045);">Divisi Amal Usa...</div>
<svg class="a" style="left:899px;top:840.65px" width="30" height="30" viewBox="0 0 32 32"><circle cx="16" cy="16" r="15.2" fill="#fff" stroke="#8fdc8f" stroke-width="1.1"/><circle cx="16" cy="16" r="12.3" fill="none" stroke="#c9c9c9" stroke-width="1.8" stroke-dasharray="0.9 0.7"/><path d="M9.5 15.5L16 10L22.5 15.5M11 17L16 13L21 17" fill="none" stroke="#8be38b" stroke-width="0.9"/><rect x="13.6" y="14.6" width="4.8" height="3.8" fill="#e58fb0"/><path d="M10.5 18.2Q16 21 21.5 18.2L20.6 19.6Q16 22 11.4 19.6Z" fill="#3cc83c"/><path d="M8.5 20Q16 24 23.5 20L22.4 22.3Q16 25.5 9.6 22.3Z" fill="#2fc02f"/><circle cx="3.6" cy="16" r="1" fill="#222"/><circle cx="28.4" cy="16" r="1" fill="#222"/></svg>
<div class="t" style="left:934.60px;top:847.01px;font-size:18.6px;color:#535a61;transform:scaleX(0.9585);">Administrator</div>
<svg class="a" style="left:1274px;top:843.65px" width="20" height="20" viewBox="0 0 20 20"><circle cx="10" cy="9.9" r="8.6" fill="none" stroke="#656c74" stroke-width="2.5"/><path d="M10.9 5.2V11H6.9" stroke="#656c74" stroke-width="1.9" fill="none"/></svg>
<div class="t" style="left:1633.65px;top:846.11px;font-size:18.6px;font-weight:700;color:#4a5056;transform:scaleX(0.9173);">Rp 5.000</div>
<div class="a" style="left:1716px;top:841.65px;width:138px;height:24px;border-radius:12px;background:#28a745"></div>
<div class="t" style="left:1728.50px;top:846.11px;font-size:16.7px;font-weight:700;color:#fff;transform:scaleX(0.8567);">Order Pembeli...</div>
<div class="a" style="left:183px;top:882px;width:1717px;height:51px;background:#fafafb"></div>
<div class="hl" style="left:183px;top:933px;width:1717px"></div>
<div class="cb" style="left:203px;top:898.45px"></div>
<svg class="a" style="left:238px;top:892.25px" width="24" height="23" viewBox="0 0 24 23"><path d="M12 1.5L14.9 8.4L22.3 9L16.7 13.9L18.4 21.2L12 17.3L5.6 21.2L7.3 13.9L1.7 9L9.1 8.4Z" fill="none" stroke="#6c7177" stroke-width="1.7" stroke-linejoin="round"/></svg>
<div class="t" style="left:350.93px;top:897.31px;font-size:18.6px;font-weight:700;color:#4a5056;transform:scaleX(0.8715);">P00052</div>
<div class="t" style="left:462.83px;top:896.31px;font-size:18.6px;color:#535a61;transform:scaleX(0.8660);">Della</div>
<div class="t" style="left:750.70px;top:896.41px;font-size:18.6px;color:#535a61;transform:scaleX(0.9045);">Divisi Amal Usa...</div>
<svg class="a" style="left:899px;top:891.95px" width="30" height="30" viewBox="0 0 32 32"><circle cx="16" cy="16" r="15.2" fill="#fff" stroke="#8fdc8f" stroke-width="1.1"/><circle cx="16" cy="16" r="12.3" fill="none" stroke="#c9c9c9" stroke-width="1.8" stroke-dasharray="0.9 0.7"/><path d="M9.5 15.5L16 10L22.5 15.5M11 17L16 13L21 17" fill="none" stroke="#8be38b" stroke-width="0.9"/><rect x="13.6" y="14.6" width="4.8" height="3.8" fill="#e58fb0"/><path d="M10.5 18.2Q16 21 21.5 18.2L20.6 19.6Q16 22 11.4 19.6Z" fill="#3cc83c"/><path d="M8.5 20Q16 24 23.5 20L22.4 22.3Q16 25.5 9.6 22.3Z" fill="#2fc02f"/><circle cx="3.6" cy="16" r="1" fill="#222"/><circle cx="28.4" cy="16" r="1" fill="#222"/></svg>
<div class="t" style="left:934.60px;top:898.31px;font-size:18.6px;color:#535a61;transform:scaleX(0.9585);">Administrator</div>
<svg class="a" style="left:1274px;top:894.95px" width="20" height="20" viewBox="0 0 20 20"><circle cx="10" cy="9.9" r="8.6" fill="none" stroke="#656c74" stroke-width="2.5"/><path d="M10.9 5.2V11H6.9" stroke="#656c74" stroke-width="1.9" fill="none"/></svg>
<div class="t" style="left:1614.68px;top:897.41px;font-size:18.6px;font-weight:700;color:#4a5056;transform:scaleX(0.9173);">Rp 100.000</div>
<div class="a" style="left:1716px;top:892.95px;width:138px;height:24px;border-radius:12px;background:#28a745"></div>
<div class="t" style="left:1728.50px;top:897.41px;font-size:16.7px;font-weight:700;color:#fff;transform:scaleX(0.8567);">Order Pembeli...</div>
<div class="a" style="left:1900px;top:369px;width:18px;height:542px;background:#f7f8fa"></div>
<div class="a" style="left:1910px;top:131px;width:10px;height:597px;background:#878787;border-radius:5px"></div>
<div class="a" style="left:1900px;top:369px;width:10px;height:197px;background:#878787;border-radius:5px"></div>
<div class="a" style="left:0;top:910px;width:1918px;height:1px;background:#3a3a3a"></div>
<div class="a" style="left:415px;top:117px;width:917px;height:595px;background:#fff;border:4px solid #ff0000;border-radius:2px"></div>
<svg class="a" style="left:456px;top:149px" width="16" height="15" viewBox="0 0 16 15"><path d="M0 0H15.5L9.8 6.5V15L5.8 11.5V6.5Z" fill="#1d5c55"/></svg>
<div class="t" style="left:482.04px;top:148.06px;font-size:18.6px;font-weight:700;color:#2a2e33;transform:scaleX(0.9555);">Penyaring</div>
<div class="t" style="left:461.54px;top:187.96px;font-size:18.6px;color:#50575e;transform:scaleX(0.8636);">Purchase Saya</div>
<div class="t" style="left:461.42px;top:222.06px;font-size:18.6px;color:#50575e;transform:scaleX(0.9778);">Membintangi</div>
<div class="t" style="left:461.56px;top:277.06px;font-size:18.6px;color:#50575e;transform:scaleX(0.8363);">RFQ</div>
<div class="t" style="left:462.40px;top:311.16px;font-size:18.6px;color:#50575e;transform:scaleX(0.9285);">Tidak Diakui</div>
<div class="t" style="left:462.40px;top:365.66px;font-size:18.6px;color:#50575e;transform:scaleX(0.9193);">Order Pembelian</div>
<div class="t" style="left:462.40px;top:399.06px;font-size:18.6px;color:#50575e;transform:scaleX(0.9336);">Akan Disetujui</div>
<div class="t" style="left:462.40px;top:454.46px;font-size:18.6px;color:#50575e;transform:scaleX(0.9198);">Tanggal Order</div>
<div class="t" style="left:461.50px;top:488.46px;font-size:18.6px;color:#50575e;transform:scaleX(0.8962);">Draft RFQ</div>
<div class="t" style="left:461.48px;top:521.76px;font-size:18.6px;color:#50575e;transform:scaleX(0.9233);">RFQ Menunggu</div>
<div class="t" style="left:461.49px;top:554.86px;font-size:18.6px;color:#50575e;transform:scaleX(0.9067);">RFQ terlambat</div>
<div class="t" style="left:461.48px;top:610.26px;font-size:18.6px;color:#50575e;transform:scaleX(0.9177);">Peringatan</div>
<div class="t" style="left:462.40px;top:665.46px;font-size:18.6px;color:#50575e;transform:scaleX(0.9120);">Tambahkan Penyaring Sendiri</div>
<div class="dv" style="left:437px;top:257px;width:272px"></div>
<div class="dv" style="left:437px;top:346px;width:272px"></div>
<div class="dv" style="left:437px;top:434px;width:272px"></div>
<div class="dv" style="left:437px;top:590px;width:272px"></div>
<div class="dv" style="left:437px;top:645px;width:272px"></div>
<div class="caret" style="left:688px;top:459px"></div>
<div class="vl" style="left:729px;top:141px;height:548px"></div>
<svg class="a" style="left:770px;top:147px" width="19" height="20" viewBox="0 0 19 20"><g fill="#14a05f"><path d="M9.5 0L19 5.2L9.5 10.3L0 5.2Z"/><path d="M0.8 8.3L9.5 12.9L18.2 8.3V10.6L9.5 15.2L0.8 10.6Z"/><path d="M0.8 12L9.5 16.6L18.2 12V14.3L9.5 18.9L0.8 14.3Z"/></g></svg>
<div class="t" style="left:799.41px;top:148.26px;font-size:18.6px;font-weight:700;color:#2a2e33;transform:scaleX(0.9929);">Dikelompokkan</div>
<div class="t" style="left:769.63px;top:176.86px;font-size:18.6px;font-weight:700;color:#2a2e33;transform:scaleX(0.9658);">berdasarkan</div>
<div class="t" style="left:774.72px;top:216.46px;font-size:18.6px;color:#50575e;transform:scaleX(0.8833);">Pemasok</div>
<div class="t" style="left:775.60px;top:250.56px;font-size:18.6px;color:#50575e;transform:scaleX(0.9153);">Wakil Pembelian</div>
<div class="t" style="left:775.60px;top:284.56px;font-size:18.6px;color:#50575e;transform:scaleX(0.9189);">Tanggal Order</div>
<div class="t" style="left:775.60px;top:339.76px;font-size:18.6px;color:#50575e;transform:scaleX(0.9161);">Tambahkan Grup Kustom</div>
<div class="caret" style="left:1002px;top:290px"></div>
<div class="dv" style="left:750px;top:320px;width:272px"></div>
<div class="caret" style="left:997px;top:346px;border-top-color:#8a9096;border-left-width:4.5px;border-right-width:4.5px;border-top-width:4.5px"></div>
<div class="vl" style="left:1042px;top:141px;height:223px"></div>
<svg class="a" style="left:1082px;top:146px" width="20" height="19" viewBox="0 0 24 23"><path d="M12 0.5L15.2 8L23.5 8.6L17.2 14L19.2 22.2L12 17.9L4.8 22.2L6.8 14L0.5 8.6L8.8 8Z" fill="#f3cc1a"/></svg>
<div class="t" style="left:1110.95px;top:147.96px;font-size:18.6px;font-weight:700;color:#2a2e33;transform:scaleX(0.9523);">Favorit</div>
<div class="t" style="left:1088.00px;top:188.26px;font-size:18.6px;color:#50575e;transform:scaleX(0.9247);">Simpan pencarian saat ini</div>
<div class="caret" style="left:1290px;top:194px"></div>
<div class="a" style="left:203px;top:68px;width:63px;height:41px;background:#10a062;border-radius:6px"></div>
<div class="t" style="left:215.83px;top:80.16px;font-size:18.6px;font-weight:700;color:#fff;transform:scaleX(0.8682);">Baru</div>
<div class="t" style="left:271.77px;top:78.50px;font-size:21.5px;color:#3f454b;transform:scaleX(0.9321);">Permintaan Penawaran</div>
<svg class="a" style="left:486.6px;top:81.6px" width="16" height="16" viewBox="-8 -8 16 16"><g fill="#454b51"><circle r="6.2"/><rect x="-1.8" y="-7.7" width="3.6" height="15.4" rx="0.4"/><rect x="-1.8" y="-7.7" width="3.6" height="15.4" rx="0.4" transform="rotate(45)"/><rect x="-1.8" y="-7.7" width="3.6" height="15.4" rx="0.4" transform="rotate(90)"/><rect x="-1.8" y="-7.7" width="3.6" height="15.4" rx="0.4" transform="rotate(135)"/></g><circle r="2.5" fill="#fff"/></svg>
<div class="a" style="left:771px;top:67px;width:530px;height:43px;border:1px solid #dee2e6;border-right:none;border-radius:6px 0 0 6px;background:#fff"></div>
<svg class="a" style="left:784px;top:79px" width="19" height="19" viewBox="0 0 19 19"><circle cx="7.8" cy="7.8" r="6.3" fill="none" stroke="#2b3035" stroke-width="2"/><path d="M12.5 12.5L17.5 17.5" stroke="#2b3035" stroke-width="2.2" stroke-linecap="round"/></svg>
<div class="t" style="left:818.00px;top:80.06px;font-size:18.6px;color:#b3bac2;transform:scaleX(0.8397);">Cari ...</div>
<div class="a" style="left:1297px;top:68px;width:33px;height:41px;background:#c9e5dc"></div>
<div class="a" style="left:1308px;top:85px;width:0;height:0;border-left:5px solid transparent;border-right:5px solid transparent;border-bottom:5px solid #22262a"></div>
<div class="a" style="left:1295px;top:66px;width:37px;height:45px;border:4px solid #ff0000;border-radius:2px"></div>
<svg class="a" style="left:1340px;top:68px" width="95" height="42" viewBox="0 0 95 42"><path d="M7 21.3H89.5" stroke="#ff2020" stroke-width="2.7" stroke-linecap="round"/><path d="M22.4 5.3L6.8 21.3L22.2 36.7" stroke="#ff2020" stroke-width="2.7" fill="none" stroke-linecap="round" stroke-linejoin="round"/></svg>
<div class="t" style="left:1447.95px;top:78.96px;font-size:18.6px;color:#3f454b;transform:scaleX(0.9479);">1-58 / 58</div>
<div class="a" style="left:1528px;top:67px;width:39px;height:40px;background:#edeef1;border-radius:6px 0 0 6px"></div>
<div class="a" style="left:1569px;top:67px;width:39px;height:40px;background:#edeef1;border-radius:0 6px 6px 0"></div>
<svg class="a" style="left:1541px;top:76px" width="14" height="20" viewBox="0 0 14 20"><path d="M11 2L3 10L11 18" stroke="#6c7177" stroke-width="1.8" fill="none"/></svg>
<svg class="a" style="left:1581px;top:76px" width="14" height="20" viewBox="0 0 14 20"><path d="M3 2L11 10L3 18" stroke="#6c7177" stroke-width="1.8" fill="none"/></svg>
<div class="a" style="left:1628px;top:67px;width:45px;height:40px;background:#c9e5dc;border:1px solid #1f9e63;border-radius:6px 0 0 6px"></div>
<div class="a" style="left:1674px;top:67px;width:44px;height:40px;background:#dfe2e6"></div>
<div class="a" style="left:1720px;top:67px;width:44px;height:40px;background:#dfe2e6"></div>
<div class="a" style="left:1765px;top:67px;width:47px;height:40px;background:#dfe2e6"></div>
<div class="a" style="left:1814px;top:67px;width:43px;height:40px;background:#dfe2e6"></div>
<div class="a" style="left:1858px;top:67px;width:42px;height:40px;background:#dfe2e6;border-radius:0 6px 6px 0"></div>
<svg class="a" style="left:1641px;top:80px" width="19" height="15" viewBox="0 0 19 15"><rect x="0" y="0" width="19" height="4" fill="#22262a"/><rect x="0" y="5.5" width="19" height="4" fill="#22262a"/><rect x="0" y="11" width="19" height="3.5" fill="#22262a"/></svg>
<svg class="a" style="left:1687px;top:79px" width="19" height="18" viewBox="0 0 19 18"><rect x="0" y="0" width="19" height="1.2" fill="#2b3035"/><rect x="0" y="2.5" width="8" height="15.5" fill="#2b3035"/><rect x="11" y="2.5" width="8" height="8" fill="#2b3035"/></svg>
<svg class="a" style="left:1733px;top:78px" width="19" height="19" viewBox="0 0 19 19"><path d="M7 1H17.5V17.5H1V7H7Z M1 12H17.5 M7 7V17.5 M12 1V17.5 M7 7H17.5" stroke="#2b3035" stroke-width="1.5" fill="none"/></svg>
<svg class="a" style="left:1779px;top:79px" width="21" height="17" viewBox="0 0 21 17"><path d="M1 0V16H21" stroke="#2b3035" stroke-width="1.4" fill="none"/><path d="M3 15V7L7 3L11 7.5L15 5L19.5 15Z" fill="#2b3035"/></svg>
<svg class="a" style="left:1826px;top:78px" width="18" height="19" viewBox="0 0 18 19"><rect x="1" y="3" width="16" height="15" rx="1.5" fill="none" stroke="#2b3035" stroke-width="1.5"/><rect x="1" y="3" width="16" height="4" fill="#2b3035"/><rect x="4" y="0.5" width="2" height="4" rx="1" fill="#2b3035"/><rect x="12" y="0.5" width="2" height="4" rx="1" fill="#2b3035"/><path d="M5.5 7V18M9 7V18M12.5 7V18M1 10.5H17M1 14H17" stroke="#2b3035" stroke-width="1"/></svg>
<svg class="a" style="left:1870px;top:79px" width="18" height="18" viewBox="0 0 18 18"><circle cx="9" cy="9" r="7.3" fill="none" stroke="#2b3035" stroke-width="2"/><path d="M9 4.5V9.5H6" stroke="#2b3035" stroke-width="1.6" fill="none"/></svg>

</body></html>
